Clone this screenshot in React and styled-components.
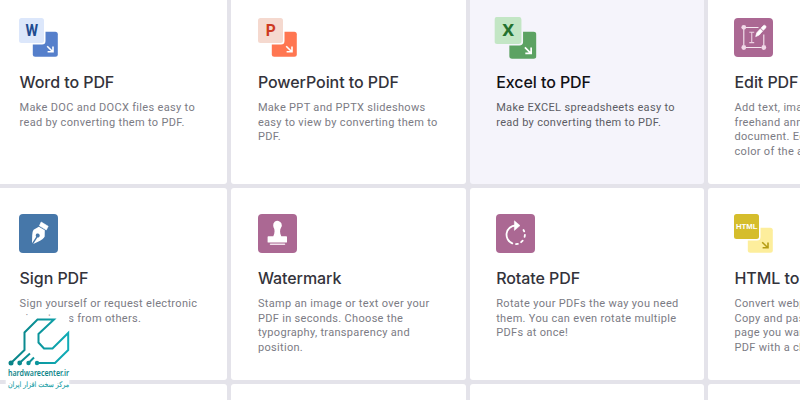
import React from "react";
import styled, { createGlobalStyle } from "styled-components";

const GlobalStyle = createGlobalStyle`
  body {
    margin: 0;
    background: #e4e3ea;
  }
`;

const Page = styled.main`
  width: 800px;
  height: 400px;
  overflow: hidden;
  position: relative;
  background: #e4e3ea;
  font-family: Inter, "Liberation Sans", sans-serif;
`;

const ToolGrid = styled.div`
  display: grid;
  grid-template-columns: repeat(4, 234.3px);
  grid-auto-rows: 192px;
  gap: 4px;
  margin: -8px 0 0 -6.9px;
`;

const Card = styled.article`
  box-sizing: border-box;
  padding: 26px 0 0 26.3px;
  border-radius: 3px;
  background: ${({ $active }) => ($active ? "#f5f4fb" : "#fff")};
  color: ${({ $active }) => ($active ? "#111116" : "#33333b")};
`;

const IconBox = styled.div`
  width: 39px;
  height: 39px;
  transform: ${({ $active }) => ($active ? "translateY(0.5px) scale(1.08)" : "none")};

  svg {
    display: block;
  }
`;

const Title = styled.h2`
  margin: 15px 0 0;
  padding-left: 0.2px;
  font-size: 16px;
  line-height: 20px;
  font-weight: 550;
  letter-spacing: -0.07px;
  white-space: nowrap;
`;

const Description = styled.p`
  margin: 9px 0 0;
  padding-left: 0.2px;
  font-family: Roboto, "Liberation Sans", sans-serif;
  font-size: 11px;
  line-height: 14.5px;
  letter-spacing: 0.32px;
  white-space: pre;
  color: ${({ $active }) => ($active ? "#5c5c64" : "#7b7b84")};
`;

const Brand = styled.div`
  position: absolute;
  left: 6px;
  top: 316px;
  width: 63px;
  height: 84px;
  background: #fff;
  box-shadow: 0 0 2px #fff;

  svg {
    display: block;
  }
`;

const ConvertIcon = ({ letter, front, back, ink, arrow = "#fff", edge = "#fff", html, width }) => (
  <svg width="39" height="39" viewBox="0 0 39 39">
    <rect x="13.8" y="13.7" width="25" height="25" rx="2.5" fill={back} />
    <path d="M0 0H23.4A3 3 0 0 1 26.5 3V23A3.5 3.5 0 0 1 23 26.5H0Z" fill={edge} />
    <rect x="0" y="0" width="25" height="25" rx="2.5" fill={front} />
    <text
      x={html ? 2 : 12.7 - width / 2}
      y={html ? 15.2 : 17.8}
      fill={ink}
      fontFamily={html ? "Liberation Sans" : "Roboto"}
      fontWeight="700"
      fontSize={html ? 7.2 : 15.8}
      textLength={html ? 21.5 : width}
      lengthAdjust="spacingAndGlyphs"
    >
      {letter}
    </text>
    <path d="M28.2 28.2L33.3 33.2M34 28.4V33.8H28.6" fill="none" stroke={arrow} strokeWidth="1.6" />
  </svg>
);

const SolidIcon = ({ color, children }) => (
  <svg width="39" height="39" viewBox="0 0 39 39">
    <rect width="39" height="39" rx="4" fill={color} />
    {children}
  </svg>
);

const EditIcon = () => (
  <SolidIcon color="#ab6893">
    <path d="M11.5 9.5H24.5M9.8 11V27M12 29.5H27.5M29.8 27V16.5" stroke="#f6e8f1" strokeWidth="1.1" fill="none" />
    <g fill="#f1d9e8">
      <circle cx="9.8" cy="9.3" r="2.4" />
      <circle cx="9.8" cy="29.5" r="2.4" />
      <circle cx="29.8" cy="29.5" r="2.4" />
    </g>
    <path d="M15.3 14.2H20.2M17.75 14.2V24.6M15.3 24.6H20.2" stroke="#ecd0e1" strokeWidth="1.1" fill="none" />
    <path d="M21.7 18.6L22.8 14.8L26.3 10.9L28.6 13.1L25.2 17ZM27.1 10.1L29.3 7.7Q30.4 6.7 31.5 7.8Q32.5 8.8 31.6 9.9L29.4 12.3Z" fill="#fff" stroke="#fff" strokeWidth=".7" />
  </SolidIcon>
);

const SignIcon = () => (
  <SolidIcon color="#4677a9">
    <path d="M22.2 8L29.2 12.3L27.3 16L20.4 11.8Z" fill="#fff" strokeLinejoin="round" stroke="#fff" strokeWidth=".6" />
    <path d="M19.8 12.7L25.8 16.3L25.7 22.4Q24.9 25 18 28.2L14.2 30L18.4 23.4A2 2 0 1 0 17.2 22.7L13 29.3L13.2 21.2Q13.4 17 14.6 15.8Z" fill="#fff" />
  </SolidIcon>
);

const StampIcon = () => (
  <SolidIcon color="#ab6893">
    <path d="M15.2 11.5A4.3 4.3 0 1 1 23.1 13.4C21.8 15.5 21.6 18.5 23.3 22.3H28.2Q29 22.3 29 23V28Q29 28.6 28.3 28.6H10.2Q9.6 28.6 9.6 28V23Q9.6 22.3 10.3 22.3H15.3C17 18.5 16.9 15.5 15.5 13.2Z" fill="#fff" />
    <path d="M12.5 30.3H26.5" stroke="#f3e2ed" strokeWidth="1.5" strokeLinecap="round" />
  </SolidIcon>
);

const RotateIcon = () => (
  <SolidIcon color="#ab6893">
    <path d="M19.5 11.5A9.3 9.3 0 0 0 16.3 29.4" stroke="#fff" strokeWidth="1.8" fill="none" strokeLinecap="round" />
    <path d="M18.4 6.8V16.4L24 11.6Z" fill="#fff" stroke="#fff" strokeWidth=".5" strokeLinejoin="round" />
    <path d="M20 30.1L21.9 29.8M25.1 28.2L26.7 26.6M28.6 22.9L28.9 20.9M28.2 17.4L27.5 16" stroke="#fff" strokeWidth="1.8" fill="none" strokeLinecap="round" />
  </SolidIcon>
);

const tools = [
  {
    title: "Word to PDF",
    lines: ["Make DOC and DOCX files easy to", "read by converting them to PDF."],
    icon: <ConvertIcon letter="W" width={12.6} front="#dce7fb" back="#557fcb" ink="#1f4c91" />,
  },
  {
    title: "PowerPoint to PDF",
    lines: ["Make PPT and PPTX slideshows", "easy to view by converting them to", "PDF."],
    icon: <ConvertIcon letter="P" width={10} front="#f5d9cf" back="#ff7651" ink="#cd3820" />,
  },
  {
    title: "Excel to PDF",
    active: true,
    lines: ["Make EXCEL spreadsheets easy to", "read by converting them to PDF."],
    icon: <ConvertIcon letter="X" width={11} front="#c3e6c5" back="#5ca262" ink="#25722f" edge="#f5f4fb" />,
  },
  {
    title: "Edit PDF",
    lines: ["Add text, images, shapes or", "freehand annotations to a PDF", "document. Edit the size, font, and", "color of the added content."],
    icon: <EditIcon />,
  },
  {
    title: "Sign PDF",
    lines: ["Sign yourself or request electronic", "signatures from others."],
    icon: <SignIcon />,
  },
  {
    title: "Watermark",
    lines: ["Stamp an image or text over your", "PDF in seconds. Choose the", "typography, transparency and", "position."],
    icon: <StampIcon />,
  },
  {
    title: "Rotate PDF",
    lines: ["Rotate your PDFs the way you need", "them. You can even rotate multiple", "PDFs at once!"],
    icon: <RotateIcon />,
  },
  {
    title: "HTML to PDF",
    lines: ["Convert webpages in HTML to PDF.", "Copy and paste the URL of the", "page you want and convert it to", "PDF with a click."],
    icon: <ConvertIcon html letter="HTML" front="#d5bd2c" back="#fdee9c" ink="#fff" arrow="#b59c13" />,
  },
];

const BrandLogo = () => (
  <svg width="65" height="84" viewBox="6 316 65 84">
    <defs>
      <linearGradient id="teal" gradientUnits="userSpaceOnUse" x1="10" y1="340" x2="70" y2="350">
        <stop offset="0" stopColor="#087f82" />
        <stop offset="1" stopColor="#10aeb9" />
      </linearGradient>
    </defs>
    <g fill="none" stroke="url(#teal)" strokeWidth="2">
      <path d="M11 363L24.5 350V332.5L37.5 319.5H54L38.5 334V342.5L44 348.5H52.5L68.2 333V350L55 363H37" />
      <path d="M19.5 363L30 353.5M28.5 363L34 357.5" />
    </g>
    <g fill="url(#teal)">
      <circle cx="11" cy="363" r="2.5" />
      <circle cx="19.7" cy="363" r="2.4" />
      <circle cx="28.5" cy="363" r="2.2" />
      <circle cx="37" cy="363" r="2.2" />
    </g>
    <text x="8" y="376" fontFamily="Noto Sans" fontSize="8" fontWeight="600" fill="#12868a" textLength="61" lengthAdjust="spacingAndGlyphs">
      hardwarecenter.ir
    </text>
    <text x="38.5" y="387" textAnchor="middle" fontFamily="DejaVu Sans" fontSize="7.6" fill="#209fa8" stroke="#209fa8" strokeWidth=".15" direction="rtl" textLength="61" lengthAdjust="spacingAndGlyphs">
      مرکز سخت افزار ایران
    </text>
  </svg>
);

const App = () => {
  return (
    <>
      <GlobalStyle />
      <Page>
        <ToolGrid>
          {tools.map(({ title, lines, icon, active }) => (
            <Card key={title} $active={active}>
              <IconBox $active={active}>{icon}</IconBox>
              <Title>{title}</Title>
              <Description $active={active}>{lines.join("\n")}</Description>
            </Card>
          ))}
          <Card />
          <Card />
          <Card />
          <Card />
        </ToolGrid>
        <Brand>
          <BrandLogo />
        </Brand>
      </Page>
    </>
  );
};

export default App;
